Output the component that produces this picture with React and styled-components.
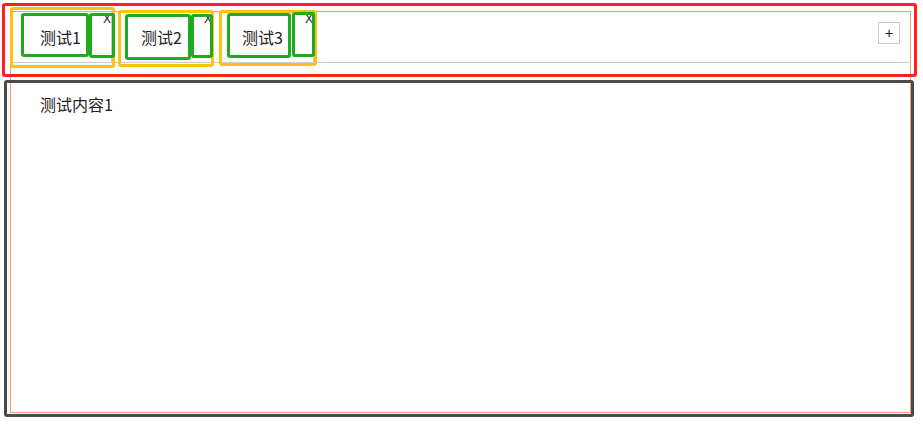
import React from "react";
import styled, { createGlobalStyle } from "styled-components";

const GlobalStyle = createGlobalStyle`
  html, body {
    margin: 0;
    padding: 0;
    background: #fff;
  }
  body {
    min-height: 445px;
    font-family: "Noto Sans CJK SC", "Noto Sans", sans-serif;
    color: #222;
  }
  #root {
    min-height: 445px;
    overflow: hidden;
  }
`;

// debug outline drawn over a part, offsets come from props
const Marker = styled.span`
  position: absolute;
  box-sizing: border-box;
  pointer-events: none;
  border: 3px solid ${(p) => p.color};
  border-radius: 3px;
  left: ${(p) => p.l}px;
  top: ${(p) => p.t}px;
  ${(p) => (p.w != null ? `width: ${p.w}px;` : `right: ${p.r}px;`)}
  ${(p) => (p.h != null ? `height: ${p.h}px;` : `bottom: ${p.b}px;`)}
`;

const Frame = styled.div`
  box-sizing: border-box;
  width: 901px;
  height: 402px;
  margin: 11px 0 0 10px;
  border: 1px solid #f4a07c;
  display: flex;
  flex-direction: column;
`;

const TabBar = styled.div`
  position: relative;
  box-sizing: border-box;
  height: 51px;
  display: flex;
  align-items: stretch;
  border-bottom: 1px solid #ccc;
`;

const Tab = styled.div`
  position: relative;
  box-sizing: border-box;
  width: 101px;
  display: flex;
  align-items: center;
  padding-left: 29px;
  border-right: 1px solid #ccc;
  cursor: pointer;
`;

const TabLabel = styled.span`
  font-size: 16px;
  line-height: 23px;
  white-space: nowrap;
`;

const CloseButton = styled.span`
  align-self: flex-start;
  margin: 1px 0 0 auto;
  font-family: "Liberation Sans", Arial, sans-serif;
  font-size: 12px;
  line-height: 12px;
`;

const AddButton = styled.button`
  box-sizing: border-box;
  align-self: flex-start;
  width: 22px;
  height: 22px;
  margin: 10px 10px 0 auto;
  padding: 0;
  border: 1px solid #ccc;
  background: #fff;
  font-family: "Liberation Sans", Arial, sans-serif;
  font-size: 14px;
  line-height: 18px;
  color: #111;
`;

const Content = styled.div`
  position: relative;
  flex: 1;
  min-height: 0;
  padding: 30px 29px;
  font-size: 16px;
  line-height: 23px;
`;

const tabs = [
  {
    label: "测试1",
    frame: { l: -1, t: -5, r: -4, b: -6 },
    text: { l: 10, t: 1, w: 68, h: 44 },
    close: { l: 78, t: 1, w: 26, h: 45 },
  },
  {
    label: "测试2",
    frame: { l: 6, t: -2, r: -2, b: -5 },
    text: { l: 13, t: 2, w: 66, h: 46 },
    close: { l: 79, t: 2, w: 22, h: 44 },
  },
  {
    label: "测试3",
    frame: { l: 6, t: -2, r: -4, b: -4 },
    text: { l: 14, t: 1, w: 64, h: 45 },
    close: { l: 79, t: 0, w: 23, h: 45 },
  },
];

export default function App() {
  return (
    <>
      <GlobalStyle />
      <Frame>
        <TabBar>
          {tabs.map((tab) => (
            <Tab key={tab.label}>
              <TabLabel>{tab.label}</TabLabel>
              <CloseButton>X</CloseButton>
              <Marker color="#ffc20e" {...tab.frame} />
              <Marker color="#1faa1f" {...tab.text} />
              <Marker color="#1faa1f" {...tab.close} />
            </Tab>
          ))}
          <AddButton>+</AddButton>
          <Marker color="#ff1e1e" l={-9} t={-9} r={-7} b={-15} />
        </TabBar>
        <Content>
          测试内容1
          <Marker color="#4a4a4a" l={-7} t={17} r={-4} b={-5} />
        </Content>
      </Frame>
    </>
  );
}
